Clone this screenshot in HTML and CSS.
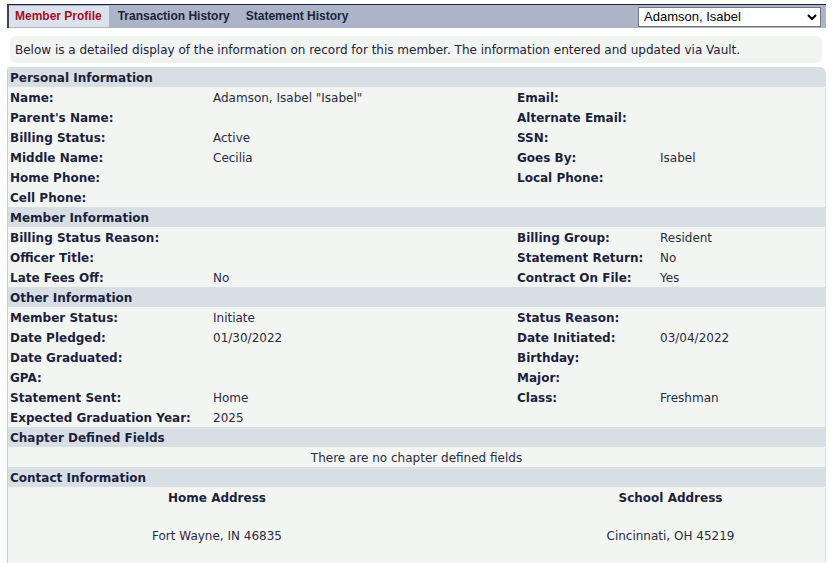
FILE: index.html
```html
<!DOCTYPE html>
<html lang="en">
<head>
  <meta charset="UTF-8" />
  <title>Member Profile</title>
  <link rel="stylesheet" href="styles.css">
</head>
<body>
  <div class="page">
    <div class="tabbar">
      <a class="tab active">Member Profile</a>
      <a class="tab">Transaction History</a>
      <a class="tab">Statement History</a>
      <select class="member-select">
        <option>Adamson, Isabel</option>
      </select>
    </div>

    <div class="intro">Below is a detailed display of the information on record for this member. The information entered and updated via Vault.</div>

    <div class="profile">
      <div class="section-head">Personal Information</div>
      <div class="grid">
        <div class="lbl">Name:</div><div class="val">Adamson, Isabel "Isabel"</div><div class="lbl">Email:</div><div class="val"></div>
        <div class="lbl">Parent's Name:</div><div class="val"></div><div class="lbl">Alternate Email:</div><div class="val"></div>
        <div class="lbl">Billing Status:</div><div class="val">Active</div><div class="lbl">SSN:</div><div class="val"></div>
        <div class="lbl">Middle Name:</div><div class="val">Cecilia</div><div class="lbl">Goes By:</div><div class="val">Isabel</div>
        <div class="lbl">Home Phone:</div><div class="val"></div><div class="lbl">Local Phone:</div><div class="val"></div>
        <div class="lbl">Cell Phone:</div><div class="val"></div><div class="lbl"></div><div class="val"></div>
      </div>

      <div class="section-head">Member Information</div>
      <div class="grid">
        <div class="lbl">Billing Status Reason:</div><div class="val"></div><div class="lbl">Billing Group:</div><div class="val">Resident</div>
        <div class="lbl">Officer Title:</div><div class="val"></div><div class="lbl">Statement Return:</div><div class="val">No</div>
        <div class="lbl">Late Fees Off:</div><div class="val">No</div><div class="lbl">Contract On File:</div><div class="val">Yes</div>
      </div>

      <div class="section-head">Other Information</div>
      <div class="grid">
        <div class="lbl">Member Status:</div><div class="val">Initiate</div><div class="lbl">Status Reason:</div><div class="val"></div>
        <div class="lbl">Date Pledged:</div><div class="val">01/30/2022</div><div class="lbl">Date Initiated:</div><div class="val">03/04/2022</div>
        <div class="lbl">Date Graduated:</div><div class="val"></div><div class="lbl">Birthday:</div><div class="val"></div>
        <div class="lbl">GPA:</div><div class="val"></div><div class="lbl">Major:</div><div class="val"></div>
        <div class="lbl">Statement Sent:</div><div class="val">Home</div><div class="lbl">Class:</div><div class="val">Freshman</div>
        <div class="lbl">Expected Graduation Year:</div><div class="val">2025</div><div class="lbl"></div><div class="val"></div>
      </div>

      <div class="section-head">Chapter Defined Fields</div>
      <div class="empty-note">There are no chapter defined fields</div>

      <div class="section-head">Contact Information</div>
      <div class="address-grid">
        <div class="addr">
          <div class="addr-title">Home Address</div>
          <div class="addr-line"></div>
          <div class="addr-line">Fort Wayne, IN 46835</div>
          <div class="addr-line"></div>
        </div>
        <div class="addr school">
          <div class="addr-title">School Address</div>
          <div class="addr-line"></div>
          <div class="addr-line">Cincinnati, OH 45219</div>
          <div class="addr-line"></div>
        </div>
      </div>
    </div>
  </div>
</body>
</html>
```

FILE: styles.css
```css
* { box-sizing: border-box; }
body {
  margin: 0;
  padding: 0;
  background: #fff;
  font-family: "DejaVu Sans", Verdana, sans-serif;
  font-size: 12px;
  color: #23233b;
}

.page {
  width: 819px;
  margin-left: 7px;
  padding-top: 4px;
}

/* tabs */
.tabbar {
  display: flex;
  align-items: center;
  height: 24px;
  background: #acb5c8;
  border-top: 1px solid #1b2244;
  border-left: 2px solid #3b4260;
  padding: 1px 5px 1px 0;
}
.tab {
  font-family: "Liberation Sans", Arial, sans-serif;
  font-weight: bold;
  font-size: 12px;
  color: #1b1f3f;
  padding: 3px 7px 4px 6px;
  margin-right: 3px;
  cursor: pointer;
}
.tab.active {
  background: #dbe2e9;
  color: #a30d2d;
}
.member-select {
  margin-left: auto;
  width: 183px;
  height: 20px;
  font-family: "Liberation Sans", Arial, sans-serif;
  font-size: 13px;
  color: #000;
  background: #fff;
  border: 1px solid #767676;
  padding: 0 1px;
}

/* intro box */
.intro {
  margin: 8px 4px 4px 3px;
  padding: 6px 5px 5px;
  background: #f2f4f1;
  border-radius: 6px;
  line-height: 16px;
  color: #22223a;
}

/* main table */
.profile {
  background: #f3f5f2;
  border-left: 1px solid #c6ced6;
  border-right: 1px solid #dde2e6;
  border-radius: 4px 6px 0 0;
  overflow: hidden;
}
.section-head {
  background: #d7dee4;
  font-weight: bold;
  height: 20px;
  line-height: 22px;
  padding-left: 2px;
  color: #1c1f3d;
}
.grid {
  display: grid;
  grid-template-columns: 202px 305px 142px 1fr;
  grid-auto-rows: 20px;
  line-height: 22px;
}
.lbl {
  font-weight: bold;
  padding-left: 2px;
  color: #1c1f3d;
  white-space: nowrap;
}
.val {
  padding-left: 3px;
  color: #2b2b40;
  white-space: nowrap;
}
.empty-note {
  text-align: center;
  height: 20px;
  line-height: 22px;
  color: #2b2b40;
}

.address-grid {
  display: grid;
  grid-template-columns: 418px 1fr;
  padding-bottom: 20px;
}
.addr {
  text-align: center;
  line-height: 19px;
  padding-top: 2px;
}
.addr.school { padding-left: 90px; }
.addr-title {
  font-weight: bold;
  color: #1c1f3d;
}
.addr-line {
  height: 19px;
  color: #2b2b40;
}
```
